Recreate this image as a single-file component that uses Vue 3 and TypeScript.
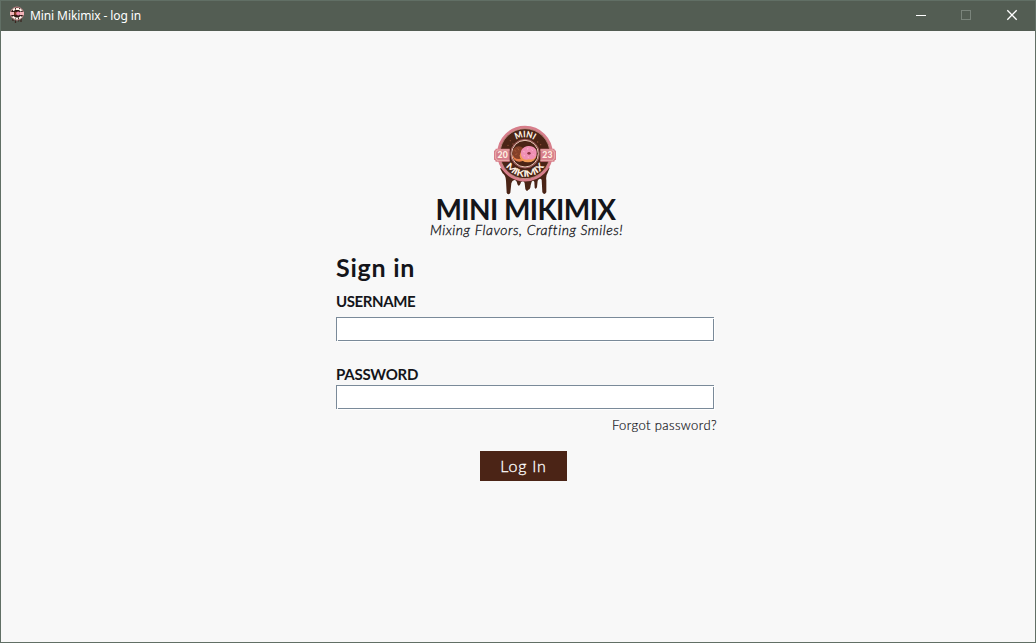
<script setup lang="ts">
import { ref } from 'vue'

const username = ref('')
const password = ref('')
</script>

<template>
  <div class="window">
    <header class="titlebar">
      <svg class="app-icon" width="16" height="18" viewBox="0 0 16 18">
        <path d="M4 12v3M6.500 14v3M9.500 14v1.500M12 12v4" stroke="#3a2620" stroke-width="1.300" />
        <circle cx="8" cy="7.500" r="6.500" fill="#2d1714" stroke="#c98a8f" stroke-width="1" />
        <path d="M4 4.500l2-2M7 3h3M10.500 3l2 2M3.500 10.500l3 2M7 12.500h2M10 12.500l2.500-2" stroke="#fff4ea" stroke-width="2" />
        <rect x="1" y="6" width="4" height="3" fill="#f2b3b8" />
        <rect x="11" y="6" width="4" height="3" fill="#f2b3b8" />
        <circle cx="6.800" cy="7.500" r="1.800" fill="#8a3f25" />
        <circle cx="9.200" cy="7.500" r="2" fill="#f08cab" />
      </svg>
      <span class="caption">Mini Mikimix - log in</span>
      <div class="controls">
        <svg width="45" height="30" viewBox="0 0 45 30"><path d="M16 14.500h10" stroke="#fff" /></svg>
        <svg width="45" height="30" viewBox="0 0 45 30"><rect x="16.500" y="9.500" width="9" height="9" fill="none" stroke="#7a847b" /></svg>
        <svg width="45" height="30" viewBox="0 0 45 30"><path d="M17.300 9.300l9.400 9.400M26.700 9.300l-9.400 9.400" stroke="#fff" stroke-width="1.300" /></svg>
      </div>
    </header>

    <main class="content">
      <svg class="logo" width="80" height="80" viewBox="0 0 240 240">
        <g fill="#4a2416">
          <path d="M45 145Q49 153 53 160Q62 166 63 182L65 218Q70 228 76 218L79 190Q81 181 88 180Q95 180 97 192Q101 202 106 192Q107 184 113 184Q118 184 119 190L121 207Q125 217 130 209Q136 210 137 196L140 185Q145 179 148 186L149 203Q152 210 156 202L158 182Q164 172 170 179L172 217Q178 227 184 217L184 181Q182 166 188 158L194 143Z" />
        </g>
        <circle cx="120" cy="101" r="79.500" fill="#4a2416" stroke="#d77e8b" stroke-width="8" />
        <circle cx="120" cy="101" r="75" fill="none" stroke="#e7aea5" stroke-width="2" />
        <g fill="#925038">
          <circle cx="76" cy="62" r="2" /><circle cx="84" cy="72" r="2" /><circle cx="69" cy="76" r="2" />
          <circle cx="158" cy="66" r="2" /><circle cx="167" cy="74" r="2" /><circle cx="155" cy="77" r="2" />
        </g>
        <path d="M32 86H74V125H32Q32 119 27 119V92Q32 92 32 86Z" fill="#d77e8b" />
        <path d="M208 86H166V125H208Q208 119 213 119V92Q208 92 208 86Z" fill="#d77e8b" />
        <path d="M74 90H36Q36 95 32 95V116Q36 116 36 121H74M166 90H204Q204 95 208 95V116Q204 116 204 121H166" fill="none" stroke="#f4c9bd" stroke-width="2" />
        <circle cx="120" cy="101" r="43" fill="#4a2416" stroke="#d77e8b" stroke-width="2" />
        <circle cx="120" cy="101" r="40" fill="none" stroke="#efcdbd" stroke-width="3" />
        <ellipse cx="103" cy="109" rx="20" ry="16" fill="#e9814d" />
        <circle cx="101" cy="98" r="19" fill="#854028" />
        <path d="M88 90l6 5M98 85l4 6M91 104l6-3M105 108l4 3" stroke="#b86842" stroke-width="2" />
        <ellipse cx="129" cy="107" rx="25" ry="20" fill="#f09b54" />
        <path d="M130 78C148 77 157 89 155 101C154 115 143 120 131 118C117 122 108 113 108 101C106 89 117 79 130 78Z" fill="#f08fb4" />
        <ellipse cx="132" cy="100" rx="5" ry="4" fill="#8c3440" />
        <path d="M115 94l4 2M126 87l4-1M140 89l3 3M144 103l3 3M128 111l4 1M116 106l4 2" stroke="#ffd0dd" stroke-width="2" />
        <path id="arc-top" d="M71 101A49 49 0 0 1 169 101" fill="none" />
        <path id="arc-bottom" d="M51 101A69 69 0 0 0 189 101" fill="none" />
        <g class="badge-text" text-anchor="middle">
          <text font-size="27"><textPath href="#arc-top" startOffset="50%" textLength="56" lengthAdjust="spacingAndGlyphs">MINI</textPath></text>
          <text font-size="27"><textPath href="#arc-bottom" startOffset="50%" textLength="136" lengthAdjust="spacingAndGlyphs">MIKIMIX</textPath></text>
          <text x="53" y="114" font-size="26" textLength="31">20</text>
          <text x="187" y="114" font-size="26" textLength="31">23</text>
        </g>
      </svg>
      <h1 class="brand">MINI MIKIMIX</h1>
      <p class="tagline">Mixing Flavors, Crafting Smiles!</p>

      <form class="form" @submit.prevent>
        <h2 class="heading">Sign in</h2>
        <label class="label user-label" for="username">USERNAME</label>
        <div class="field"><input id="username" v-model="username" type="text" /></div>
        <label class="label pass-label" for="password">PASSWORD</label>
        <div class="field"><input id="password" v-model="password" type="password" /></div>
        <a class="forgot">Forgot password?</a>
        <button class="login" type="submit">Log In</button>
      </form>
    </main>
  </div>
</template>

<style>
body {
  margin: 0;
  overflow: hidden;
}
</style>

<style scoped>
.window {
  box-sizing: border-box;
  width: 1036px;
  height: 643px;
  border: 1px solid #616f65;
  background: #f8f8f8;
  color: #14151a;
  font-family: Lato, sans-serif;
}
.titlebar {
  display: flex;
  align-items: center;
  height: 30px;
  background: #535d53;
  color: #fff;
}
.app-icon {
  margin: -2px 5px 0 8px;
}
.caption {
  flex: 1;
  font: 12px/16px "Noto Sans", sans-serif;
  letter-spacing: -0.1px;
}
.controls {
  display: flex;
}
.content {
  display: flex;
  flex-direction: column;
  align-items: flex-start;
}
.logo {
  margin: 89px 0 0 484px;
}
.badge-text {
  fill: #fff1e2;
  font-family: Lato, sans-serif;
  font-weight: 900;
}
.brand,
.tagline,
.heading {
  margin: 0;
  white-space: nowrap;
}
.brand {
  margin: -5px 0 0 434.500px;
  font-size: 28px;
  line-height: 28px;
  letter-spacing: -0.6px;
}
.tagline {
  margin: 0 0 0 429px;
  font-size: 14px;
  font-style: italic;
  font-weight: 300;
  line-height: 14px;
  letter-spacing: 0.530px;
  -webkit-text-stroke: 0.3px currentColor;
}
.form {
  display: flex;
  flex-direction: column;
  align-items: flex-start;
  width: 381px;
  margin: 13px 0 0 335px;
}
.heading {
  font-size: 25px;
  line-height: 34px;
  letter-spacing: 0.750px;
}
.label {
  font-size: 15px;
  font-weight: 700;
  line-height: 20px;
  letter-spacing: -0.400px;
}
.user-label {
  margin: 7px 0 6px;
}
.pass-label {
  margin: 23px 0 1px;
  letter-spacing: -0.250px;
}
.field {
  position: relative;
  width: 378px;
  height: 24px;
}
.field::before,
.field::after {
  content: "";
  position: absolute;
  width: 1px;
  height: 1px;
  background: #f8f8f8;
}
.field::before {
  left: 1px;
  bottom: 0;
}
.field::after {
  top: 1px;
  right: 0;
}
.field input {
  display: block;
  box-sizing: border-box;
  width: 100%;
  height: 100%;
  border: 1px solid #7a8a99;
  border-radius: 0;
  outline: 0;
  background: #fff;
  box-shadow: 1px 1px 0 #fff;
}
.forgot {
  align-self: flex-end;
  margin-top: 7px;
  font-size: 13px;
  font-weight: 300;
  line-height: 18px;
  letter-spacing: 0.400px;
  -webkit-text-stroke: 0.2px currentColor;
}
.login {
  width: 87px;
  height: 30px;
  margin: 17px 0 0 144px;
  padding: 0;
  border: 0;
  background: #4b2416;
  color: #fff;
  font: 300 16px/30px Lato, sans-serif;
  letter-spacing: 0.800px;
  -webkit-text-stroke: 0.3px currentColor;
}
</style>
